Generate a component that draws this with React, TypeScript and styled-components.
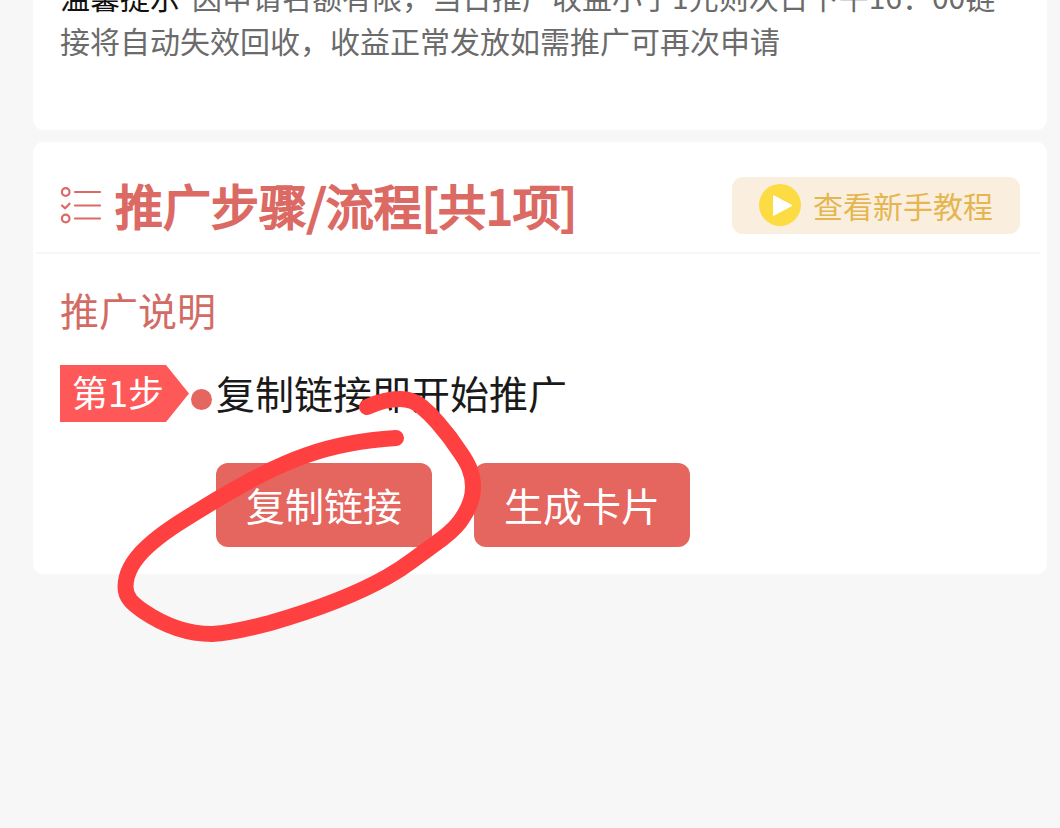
import React from "react";
import styled, { createGlobalStyle } from "styled-components";

const GlobalStyle = createGlobalStyle`
  * { box-sizing: border-box; }
  body {
    margin: 0;
    background: #f7f7f7;
    font-family: "Noto Sans CJK SC", sans-serif;
    font-weight: 400;
  }
  button { font-family: inherit; border: 0; cursor: pointer; }
`;

const Page = styled.main`
  display: flex;
  flex-direction: column;
  gap: 12px;
  min-height: 100vh;
  padding: 0 13px 0 33px;
`;

const Card = styled.section`
  position: relative;
  background: #fff;
  border-radius: 10px;
`;

const NoticeCard = styled(Card)`
  margin-top: -26px;
  padding: 0 27px 68px;
`;

const Notice = styled.p`
  margin: 0;
  font-size: 30px;
  line-height: 44px;
  color: #6b6b6b;
`;

const NoticeLabel = styled.strong`
  margin-right: 12px;
  font-weight: 400;
  color: #111;
`;

const Header = styled.header`
  display: flex;
  align-items: center;
  gap: 13px;
  margin: 0 7px 0 3px;
  padding: 35px 20px 18px 24px;
  border-bottom: 2px solid #f6f6f6;
`;

const Title = styled.h2`
  flex: 1;
  margin: 0;
  padding-bottom: 3px;
  font-size: 48px;
  line-height: 54px;
  font-weight: 400;
  -webkit-text-stroke: 2px #dc6a64;
  color: #dc6a64;
`;

const TutorialButton = styled.button`
  display: flex;
  align-items: center;
  gap: 11px;
  height: 57px;
  padding: 0 27px;
  border-radius: 11px;
  background: #faefdf;
  color: #e5b650;
  font-size: 30px;
  line-height: 57px;
`;

const Body = styled.div`
  padding: 30px 27px 27px;
`;

const Subtitle = styled.h3`
  margin: 0;
  font-size: 39px;
  line-height: 51px;
  font-weight: 400;
  color: #d36b65;
`;

const Step = styled.div`
  display: flex;
  align-items: center;
  margin-top: 30px;
`;

const StepTag = styled.span`
  width: 129px;
  height: 57px;
  padding-left: 12px;
  background: #ff5858;
  clip-path: polygon(0 0, 106px 0, 100% 50%, 106px 100%, 0 100%);
  color: #fff;
  font-size: 36px;
  line-height: 52px;
`;

const Dot = styled.span`
  width: 21px;
  height: 21px;
  margin: 12px 4px 0 2px;
  border-radius: 50%;
  background: #e5655f;
`;

const StepText = styled.span`
  padding-bottom: 2px;
  font-size: 39px;
  line-height: 55px;
  color: #1a1a1a;
`;

const Actions = styled.div`
  display: flex;
  gap: 42px;
  margin: 41px 0 0 156px;
`;

const ActionButton = styled.button`
  width: 216px;
  height: 84px;
  padding: 0 0 2px;
  border-radius: 12px;
  background: #e5655f;
  color: #fff;
  font-size: 39px;
  line-height: 82px;
`;

const Marker = styled.svg`
  position: absolute;
  left: 77px;
  top: 238px;
  pointer-events: none;
`;

const ListIcon = () => (
  <svg width="42" height="42" viewBox="0 0 42 42" fill="none" stroke="#dc6a64" strokeWidth="2.2" strokeLinecap="round" strokeLinejoin="round" aria-hidden="true">
    <circle cx="5.7" cy="7" r="3.8" />
    <path d="M2 20.5l3.2 2.8 4.3-4.6" />
    <circle cx="5.7" cy="33.5" r="3.8" />
    <path d="M15 7h25M15 20.5h25M15 33.5h25" />
  </svg>
);

const PlayIcon = () => (
  <svg width="43" height="43" viewBox="0 0 43 43" aria-hidden="true">
    <circle cx="21" cy="21" r="21" fill="#fddb42" />
    <path d="M14.5 11.5v20l18.5-10z" fill="#fff" stroke="#fff" strokeWidth="1" strokeLinejoin="round" />
  </svg>
);

export default function App() {
  return (
    <>
      <GlobalStyle />
      <Page>
        <NoticeCard>
          <Notice>
            <NoticeLabel>温馨提示</NoticeLabel>
            因申请名额有限，当日推广收益小于1元则次日下午16：00链接将自动失效回收，收益正常发放如需推广可再次申请
          </Notice>
        </NoticeCard>
        <Card>
          <Header>
            <ListIcon />
            <Title>推广步骤/流程[共1项]</Title>
            <TutorialButton type="button">
              <PlayIcon />
              查看新手教程
            </TutorialButton>
          </Header>
          <Body>
            <Subtitle>推广说明</Subtitle>
            <Step>
              <StepTag>第1步</StepTag>
              <Dot />
              <StepText>复制链接即开始推广</StepText>
            </Step>
            <Actions>
              <ActionButton type="button">复制链接</ActionButton>
              <ActionButton type="button">生成卡片</ActionButton>
            </Actions>
          </Body>
          <Marker width="380" height="270" viewBox="110 380 380 270" fill="none" stroke="#ff4040" strokeWidth="16" strokeLinecap="round" strokeLinejoin="round" aria-hidden="true">
            <path d="M396 438C365 440 335 445 307 455C275 466 245 483 216 500C190 516 165 530 147 547C134 559 125.500 573 125.500 587C125.500 598 133 604 143 611C165 626 189 634 212 634C231 633 251 628 270 623C308 612 350 598 387 577C396 572 405 566 413 560L443 538C452 531 459 524 463 517C469 508 473 498 473 487C473 472 467 462 460 452C451 438 445 431 438 423C433 417 428 412 422 407C415 401 408 399 400 399C389 399 378 402 367 407" />
          </Marker>
        </Card>
      </Page>
    </>
  );
}
